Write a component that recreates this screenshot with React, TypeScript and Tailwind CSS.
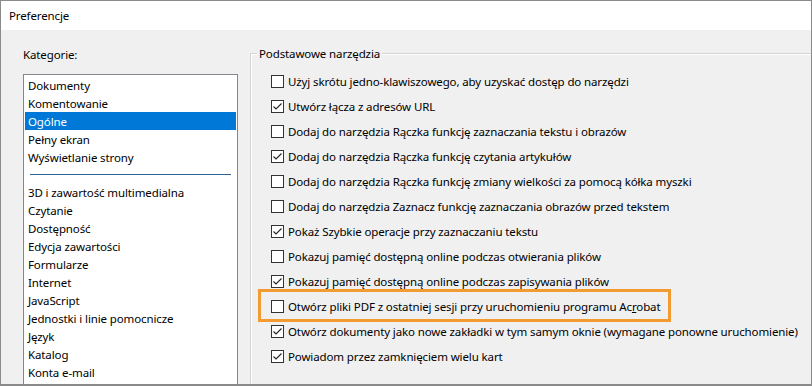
import React from "react";

const categoriesTop = ["Dokumenty", "Komentowanie", "Ogólne", "Pełny ekran", "Wyświetlanie strony"];
const categoriesBottom = [
  "3D i zawartość multimedialna",
  "Czytanie",
  "Dostępność",
  "Edycja zawartości",
  "Formularze",
  "Internet",
  "JavaScript",
  "Jednostki i linie pomocnicze",
  "Język",
  "Katalog",
  "Konta e-mail",
];

type Opt = { label: React.ReactNode; checked: boolean; highlight?: boolean };

const options: Opt[] = [
  { label: "Użyj skrótu jedno-klawiszowego, aby uzyskać dostęp do narzędzi", checked: false },
  { label: "Utwórz łącza z adresów URL", checked: true },
  { label: "Dodaj do narzędzia Rączka funkcję zaznaczania tekstu i obrazów", checked: false },
  { label: "Dodaj do narzędzia Rączka funkcję czytania artykułów", checked: true },
  { label: "Dodaj do narzędzia Rączka funkcję zmiany wielkości za pomocą kółka myszki", checked: false },
  { label: "Dodaj do narzędzia Zaznacz funkcję zaznaczania obrazów przed tekstem", checked: false },
  { label: "Pokaż Szybkie operacje przy zaznaczaniu tekstu", checked: true },
  { label: "Pokazuj pamięć dostępną online podczas otwierania plików", checked: false },
  { label: "Pokazuj pamięć dostępną online podczas zapisywania plików", checked: true },
  {
    label: (
      <>
        Otwórz pliki PDF z ostatniej sesji przy uruchomieniu programu Ac<span className="underline">r</span>obat
      </>
    ),
    checked: false,
    highlight: true,
  },
  { label: "Otwórz dokumenty jako nowe zakładki w tym samym oknie (wymagane ponowne uruchomienie)", checked: true },
  { label: "Powiadom przez zamknięciem wielu kart", checked: true },
];

function Checkbox({ checked }: { checked: boolean }) {
  return (
    <div className="w-[13px] h-[13px] border border-[#333333] bg-white flex-none flex items-center justify-center">
      {checked && (
        <svg width="11" height="11" viewBox="0 0 11 11" className="block">
          <polyline points="1.5,5.5 4,8 9.5,2.5" fill="none" stroke="#222" strokeWidth="1.1" />
        </svg>
      )}
    </div>
  );
}

export default function App() {
  return (
    <div
      className="w-[812px] h-[386px] border border-[#8a8a8a] border-b-2 flex flex-col overflow-hidden text-[11.5px] tracking-[-0.12px] text-black"
      style={{ fontFamily: '"Noto Sans", "Segoe UI", sans-serif' }}
    >
      <div className="h-[29px] bg-white flex items-center pl-[8px] flex-none">Preferencje</div>
      <div className="flex-1 bg-[#f0f0f0] flex min-h-0">
        {/* Left column */}
        <div className="ml-[22px] w-[215px] flex flex-col flex-none">
          <div className="h-[44px] flex items-center pt-[6px]">Kategorie:</div>
          <div className="flex-1 bg-white border border-b-0 border-[#828790] pt-[1px] px-[1px]">
            {categoriesTop.map((c) => (
              <div
                key={c}
                className={
                  "h-[18px] flex items-center pl-[3px] pt-[2px] " +
                  (c === "Ogólne" ? "bg-[#0078d7] text-white" : "")
                }
              >
                {c}
              </div>
            ))}
            <div className="h-[17px] flex items-center px-[5px]">
              <div className="h-[1px] w-full bg-[#2f6595]" />
            </div>
            {categoriesBottom.map((c) => (
              <div key={c} className="h-[18px] flex items-center pl-[3px] pt-[2px]">
                {c}
              </div>
            ))}
          </div>
        </div>

        {/* Right group */}
        <div className="ml-[12px] flex-1 mt-[23px] relative">
          <div className="absolute inset-0 border-l border-t border-[#d5d5d5]" />
          <div className="absolute left-[1px] top-[1px] right-0 bottom-0 border-l border-t border-white" />
          <div className="absolute left-[7px] -top-[8px] px-[2px] bg-[#f0f0f0] leading-[18px]">
            Podstawowe narzędzia
          </div>
          <div className="relative pt-[16px] pl-[21px]">
            {options.map((o, i) => (
              <div key={i} className="h-[25px] flex items-center gap-[4px] relative whitespace-nowrap">
                {o.highlight && (
                  <div className="absolute -left-[13px] -top-[5px] w-[413px] h-[33px] border-[3px] border-[#f29b30]" />
                )}
                <Checkbox checked={o.checked} />
                <span>{o.label}</span>
              </div>
            ))}
          </div>
        </div>
      </div>
    </div>
  );
}
